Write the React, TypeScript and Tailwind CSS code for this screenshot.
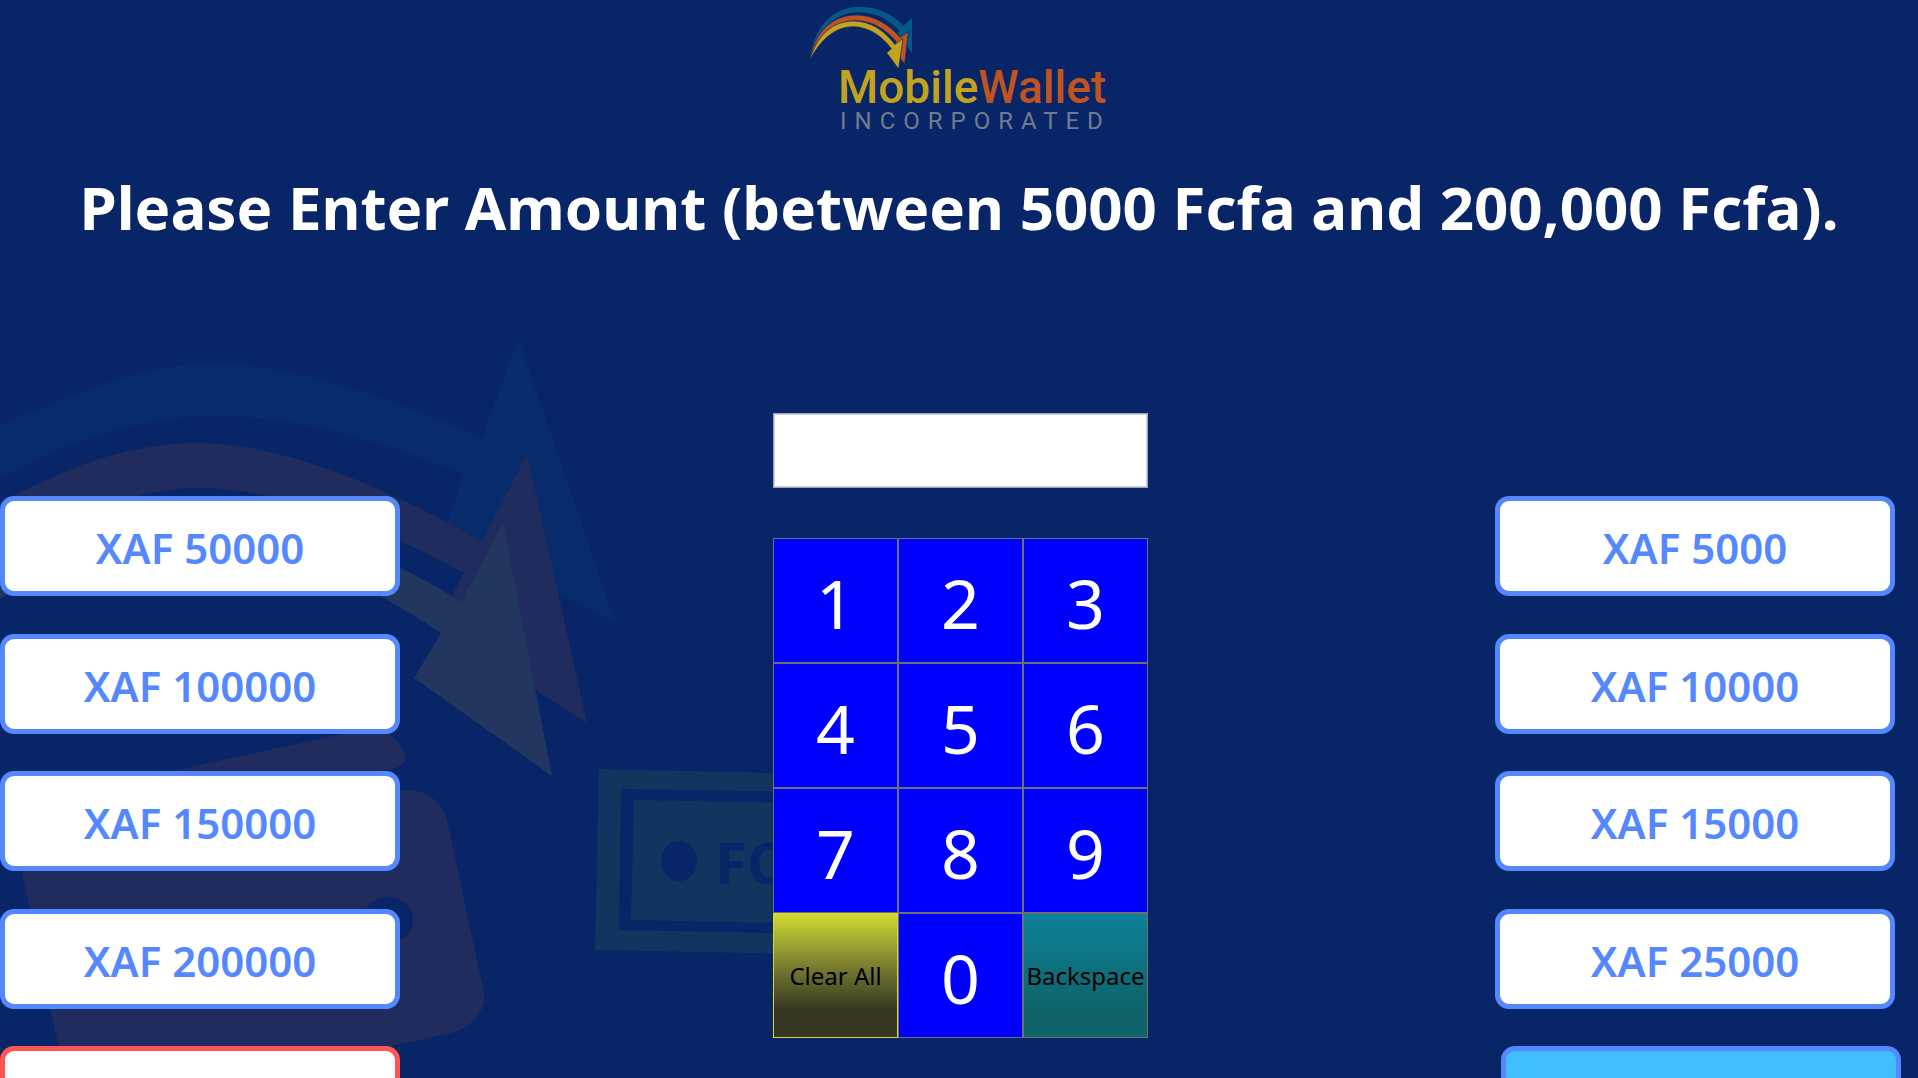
import { useState } from "react";

const leftAmounts = [50000, 100000, 150000, 200000];
const rightAmounts = [5000, 10000, 15000, 25000];
const digits = ["1", "2", "3", "4", "5", "6", "7", "8", "9"];

const choice =
  "flex h-[100px] w-[400px] shrink-0 items-center justify-center rounded-[14px] border-[5px] pt-1 text-[42px] leading-none font-semibold";
const amountChoice = `${choice} border-[#5588ff] bg-white text-[#5588ff]`;
const key =
  "flex h-[125px] items-center justify-center border border-[#707070] leading-none";
const digitKey = `${key} bg-[#0000ff] pt-1 text-[68px] text-white`;

function Logo() {
  return (
    <svg
      className="h-[136px] w-[300px]"
      viewBox="0 0 300 136"
      role="img"
      aria-label="MobileWallet Incorporated"
    >
      <g transform="translate(-20 0) scale(0.33333)">
        <path
          fill="#05598a"
          d="M63 180C72 85 130 20 212 20C268 20 314 45 343 77L369 55V160L327 99L331 92C300 58 262 38 210 37C140 36 84 88 63 180Z"
        />
        <path
          fill="#bf5420"
          stroke="#082567"
          strokeWidth="2"
          d="M63 180C76 100 126 45 204 45C256 45 300 74 334 112L358 95L347 193L310 141L322 125C289 88 252 63 203 62C138 62 90 108 63 180Z"
        />
        <path
          fill="#c1a31f"
          stroke="#082567"
          strokeWidth="2"
          d="M63 180C80 114 125 63 194 63C246 63 288 93 318 134L342 115L329 207L293 158L307 146C278 107 241 82 194 80C138 80 95 118 63 180Z"
        />
      </g>
      <text
        x="29"
        y="103"
        fontFamily="Roboto, sans-serif"
        fontWeight="500"
        fontSize="46"
        fill="#c1a31f"
      >
        Mobile<tspan fill="#bf5420">Wallet</tspan>
      </text>
      <text
        x="31"
        y="129"
        className="tracking-[8px]"
        fontFamily="Roboto, sans-serif"
        fontSize="24"
        fill="#737b90"
      >
        INCORPORATED
      </text>
    </svg>
  );
}

function Backdrop() {
  return (
    <svg
      className="pointer-events-none absolute top-0 left-0 h-[1078px] w-[900px]"
      viewBox="0 0 900 1078"
      aria-hidden="true"
    >
      <path
        fill="#082c6b"
        d="M0 426C28 413 54 402 82 392C126 374 168 364 212 364C282 364 374 390 482 438L518 338L615 621L556 592L445 528L464 474C380 440 298 416 216 416C140 416 70 440 0 478Z"
      />
      <path
        fill="#202c5e"
        d="M0 502C26 489 54 476 82 465C122 450 160 443 200 443C280 443 390 488 482 542L527 454L587 723L538 692L451 597L464 573C374 524 282 488 196 488C122 488 50 530 0 560Z"
      />
      <path
        fill="#22365f"
        d="M0 575C70 530 130 515 196 515C270 515 380 548 461 602L503 523L552 776L414 678L441 633C350 572 270 540 196 540C120 540 50 570 0 599Z"
      />
      <path
        fill="#202c5e"
        d="M140 778L347 733Q366 728 385 732C397 738 404 748 406 757Q405 768 386 770L240 800Z"
      />
      <path
        fill="#202c5e"
        fillRule="evenodd"
        d="M22 872L12 820L300 810L395 791C423 786 442 800 447 820L484 993C486 1013 470 1028 451 1033L392 1046L300 1078H65ZM388 897A25 23 0 1 0 388 943A25 23 0 1 0 388 897Z"
      />
      <path fill="#12355f" d="M599 769L900 776V956L595 950Z" />
      <path fill="#082567" d="M621 789L880 793V935L619 930Z" />
      <path fill="#12355f" d="M634 800L868 804V925L631 920Z" />
      <ellipse cx="679" cy="861" rx="18" ry="20" fill="#082567" />
      <text
        x="715"
        y="884"
        fontFamily="'Noto Sans', sans-serif"
        fontWeight="700"
        fontSize="58"
        fill="#082567"
      >
        FCFA
      </text>
    </svg>
  );
}

export default function App() {
  const [amount, setAmount] = useState("");

  return (
    <main className="relative h-screen overflow-hidden bg-[#082567] font-['Noto_Sans',sans-serif]">
      <Backdrop />
      <div className="relative">
        <header className="flex flex-col items-center">
          <Logo />
          <h1 className="mt-7 text-center text-[60px] leading-[86px] font-bold whitespace-nowrap text-white">
            Please Enter Amount (between 5000 Fcfa and 200,000 Fcfa).
          </h1>
        </header>

        <div className="mt-[163px] grid grid-cols-[773fr_375px_770fr]">
          <div className="mt-[83px] flex h-[650px] flex-col justify-between">
            {leftAmounts.map((value) => (
              <button
                key={value}
                type="button"
                className={amountChoice}
                onClick={() => setAmount(String(value))}
              >
                XAF {value}
              </button>
            ))}
            <button
              type="button"
              aria-label="Cancel"
              className={`${choice} border-[#ff5555] bg-white`}
            />
          </div>

          <div>
            <input
              type="text"
              inputMode="numeric"
              aria-label="Amount"
              value={amount}
              onChange={(e) => setAmount(e.target.value)}
              className="block h-[75px] w-full border border-[#a0a6b8] bg-white px-3 text-[42px] text-black inset-shadow-[0_0_0_1px_#cdd0db] outline-none"
            />
            <div className="mt-[50px] grid grid-cols-3">
              {digits.map((d) => (
                <button
                  key={d}
                  type="button"
                  className={digitKey}
                  onClick={() => setAmount(amount + d)}
                >
                  {d}
                </button>
              ))}
              <button
                type="button"
                className="flex h-[125px] items-center justify-center border border-[#d2dc2e] bg-linear-to-b from-[#d2dc2e] to-[#373721] to-78% text-[24px] leading-none text-black"
                onClick={() => setAmount("")}
              >
                Clear All
              </button>
              <button
                type="button"
                className={digitKey}
                onClick={() => setAmount(amount + "0")}
              >
                0
              </button>
              <button
                type="button"
                className={`${key} bg-linear-to-b from-[#0c8299] to-[#0e646a] to-75% text-[24px] text-black`}
                onClick={() => setAmount(amount.slice(0, -1))}
              >
                Backspace
              </button>
            </div>
          </div>

          <div className="mt-[83px] flex h-[650px] flex-col items-end justify-between pr-[23px]">
            {rightAmounts.map((value) => (
              <button
                key={value}
                type="button"
                className={amountChoice}
                onClick={() => setAmount(String(value))}
              >
                XAF {value}
              </button>
            ))}
            <button
              type="button"
              aria-label="Continue"
              className={`${choice} -mr-1.5 border-[#5588ff] bg-[#40bfff]`}
            />
          </div>
        </div>
      </div>
    </main>
  );
}
